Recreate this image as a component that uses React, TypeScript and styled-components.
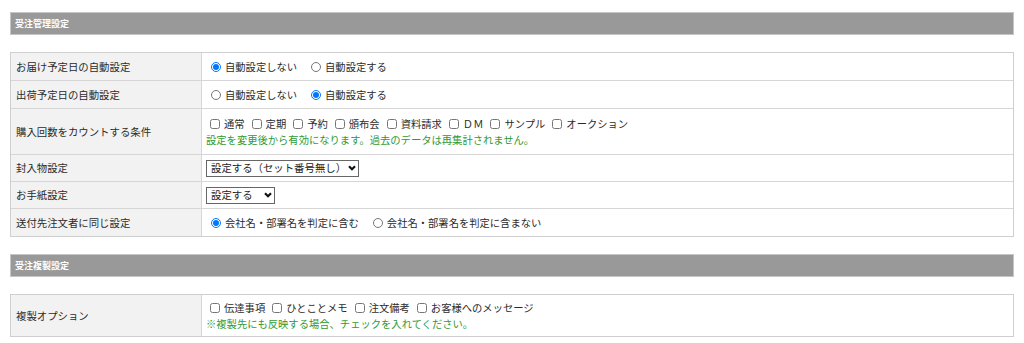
import React from "react";
import styled, { createGlobalStyle } from "styled-components";

const GlobalStyle = createGlobalStyle`
  body {
    margin: 0;
    background: #fff;
    color: #2b2b2b;
    font-family: "Noto Sans CJK JP", "Noto Sans", sans-serif;
  }
`;

const Page = styled.div`
  display: flex;
  flex-direction: column;
  gap: 17px;
  padding: 12px 10px;
`;

const SectionHeader = styled.div`
  height: 21px;
  display: flex;
  align-items: center;
  padding-left: 4px;
  background: #999;
  border: 1px solid #c6c6c6;
  color: #fff;
  font-size: 9px;
  font-weight: 700;
`;

const SettingsTable = styled.div`
  display: flex;
  flex-direction: column;
  border: 1px solid #cfcfcf;
`;

const Row = styled.div<{ $h: number }>`
  display: grid;
  grid-template-columns: 191px 1fr;
  min-height: ${(p) => p.$h}px;
  & + & {
    border-top: 1px solid #d6d6d6;
  }
`;

const Label = styled.div`
  display: flex;
  align-items: center;
  padding: 0 6px 1px 5px;
  background: #f2f2f2;
  border-right: 1px solid #d6d6d6;
  font-size: 10.4px;
  color: #2b2b2b;
`;

const Value = styled.div`
  display: flex;
  flex-direction: column;
  justify-content: center;
  align-items: flex-start;
  padding: 0 4px;
  font-size: 10.3px;
  line-height: 15.5px;
  color: #2b2b2b;
`;

const Choices = styled.div`
  display: flex;
  align-items: center;
  flex-wrap: wrap;
`;

const Option = styled.label<{ $space: number }>`
  display: inline-flex;
  align-items: center;
  margin-right: ${(p) => p.$space}px;
  white-space: nowrap;
`;

const Radio = styled.input.attrs({ type: "radio" })`
  width: 10px;
  height: 10px;
  margin: 0 4px 0 5px;
`;

const Check = styled.input.attrs({ type: "checkbox" })`
  width: 10px;
  height: 10px;
  margin: 0 4px;
`;

const Note = styled.div`
  color: #2f9a33;
`;

const SelectBox = styled.div`
  display: inline-flex;
  align-items: center;
  gap: 1px;
  height: 17px;
  box-sizing: border-box;
  padding: 0 2px 0 4px;
  border: 1px solid #666;
  background: #fff;
  select {
    appearance: none;
    border: 0;
    margin: 0;
    padding: 0;
    background: transparent;
    color: #222;
    font: inherit;
    font-size: 10.4px;
    outline: none;
  }
`;

const Chevron = () => (
  <svg width="8" height="6" viewBox="0 0 8 6">
    <path d="M1 1.2 L4 4.3 L7 1.2" fill="none" stroke="#111" strokeWidth="2.1" />
  </svg>
);

const Select = ({ options }: { options: string[] }) => (
  <SelectBox>
    <select defaultValue={options[0]}>
      {options.map((o) => (
        <option key={o}>{o}</option>
      ))}
    </select>
    <Chevron />
  </SelectBox>
);

const RadioGroup = ({ name, items, checked }: { name: string; items: string[]; checked: number }) => (
  <Choices>
    {items.map((t, i) => (
      <Option key={t} $space={9}>
        <Radio name={name} defaultChecked={i === checked} />
        {t}
      </Option>
    ))}
  </Choices>
);

const CheckGroup = ({ items }: { items: string[] }) => (
  <Choices>
    {items.map((t) => (
      <Option key={t} $space={3}>
        <Check />
        {t}
      </Option>
    ))}
  </Choices>
);

export default function App() {
  return (
    <>
      <GlobalStyle />
      <Page>
        <SectionHeader>受注管理設定</SectionHeader>
        <SettingsTable>
          <Row $h={27}>
            <Label>お届け予定日の自動設定</Label>
            <Value>
              <RadioGroup name="delivery" items={["自動設定しない", "自動設定する"]} checked={0} />
            </Value>
          </Row>
          <Row $h={27}>
            <Label>出荷予定日の自動設定</Label>
            <Value>
              <RadioGroup name="shipping" items={["自動設定しない", "自動設定する"]} checked={1} />
            </Value>
          </Row>
          <Row $h={45}>
            <Label>購入回数をカウントする条件</Label>
            <Value>
              <CheckGroup
                items={["通常", "定期", "予約", "頒布会", "資料請求", "ＤＭ", "サンプル", "オークション"]}
              />
              <Note>設定を変更後から有効になります。過去のデータは再集計されません。</Note>
            </Value>
          </Row>
          <Row $h={26}>
            <Label>封入物設定</Label>
            <Value>
              <Select options={["設定する（セット番号無し）", "設定する（セット番号有り）", "設定しない"]} />
            </Value>
          </Row>
          <Row $h={26}>
            <Label>お手紙設定</Label>
            <Value>
              <Select options={["設定する", "設定しない"]} />
            </Value>
          </Row>
          <Row $h={27}>
            <Label>送付先注文者に同じ設定</Label>
            <Value>
              <RadioGroup
                name="sender"
                items={["会社名・部署名を判定に含む", "会社名・部署名を判定に含まない"]}
                checked={0}
              />
            </Value>
          </Row>
        </SettingsTable>

        <SectionHeader>受注複製設定</SectionHeader>
        <SettingsTable>
          <Row $h={41}>
            <Label>複製オプション</Label>
            <Value>
              <CheckGroup items={["伝達事項", "ひとことメモ", "注文備考", "お客様へのメッセージ"]} />
              <Note>※複製先にも反映する場合、チェックを入れてください。</Note>
            </Value>
          </Row>
        </SettingsTable>
      </Page>
    </>
  );
}
